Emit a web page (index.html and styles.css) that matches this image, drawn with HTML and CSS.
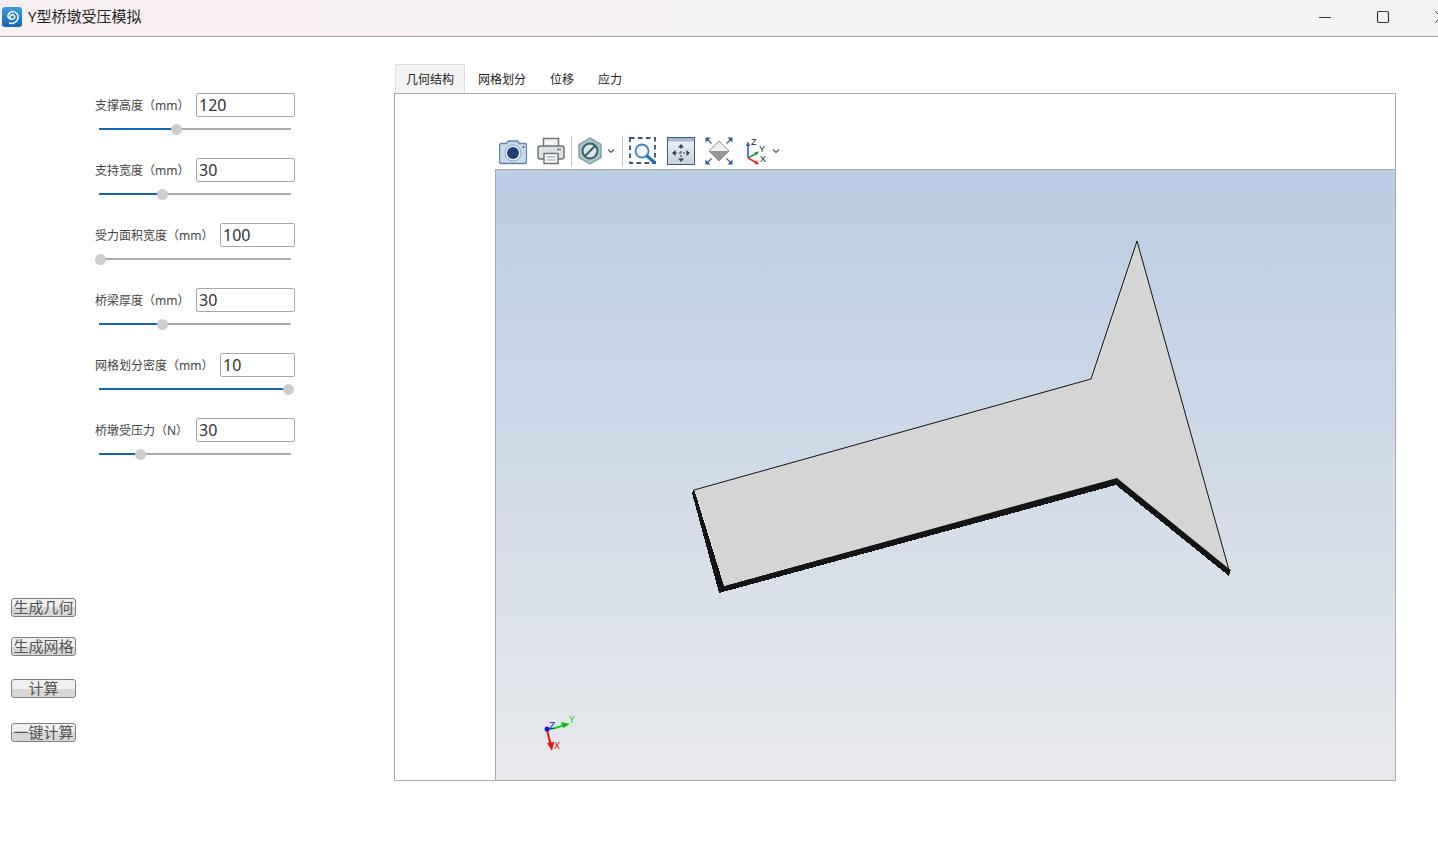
FILE: index.html
```html
<!DOCTYPE html>
<html lang="zh-CN">
<head>
<meta charset="utf-8">
<title>Y型桥墩受压模拟</title>
<link rel="stylesheet" href="styles.css">
</head>
<body>
<header class="titlebar">
  <svg class="app-icon" viewBox="0 0 20 20">
    <defs><linearGradient id="appg" x1="0" y1="0" x2="0" y2="1"><stop offset="0" stop-color="#3f9fe0"/><stop offset="1" stop-color="#1266b4"/></linearGradient></defs>
    <rect width="20" height="20" rx="3" fill="url(#appg)"/>
    <path d="M8.500 11.500a2.300 2.300 0 1 1 3.800-.2 4 4 0 0 1-6.300-1.300 4.800 4.800 0 0 1 7.500-4.500 5.600 5.600 0 0 1 2 7 6.200 6.200 0 0 1-8 3.500" fill="none" stroke="#fff" stroke-width="1.500" stroke-linecap="round"/>
  </svg>
  <span class="app-title">Y型桥墩受压模拟</span>
  <div class="win-controls">
    <span class="win-btn"><svg width="14" height="14" viewBox="0 0 14 14"><path d="M1 7.500h12" stroke="#333" stroke-width="1"/></svg></span>
    <span class="win-btn"><svg width="14" height="14" viewBox="0 0 14 14"><rect x="1.500" y="1.500" width="11" height="11" rx="1.500" fill="none" stroke="#333" stroke-width="1.200"/></svg></span>
    <span class="win-btn"><svg width="14" height="14" viewBox="0 0 14 14"><path d="M1.500 1.500l11 11M12.500 1.500l-11 11" stroke="#333" stroke-width="1"/></svg></span>
  </div>
</header>
<main class="app">
  <aside class="sidebar">
    <div class="params">
      <div class="param">
        <div class="param-head"><label class="param-label">支撑高度（mm）</label><input class="param-input" value="120"></div>
        <div class="slider"><div class="slider-fill" style="width:77px"></div><div class="slider-thumb"></div></div>
      </div>
      <div class="param">
        <div class="param-head"><label class="param-label">支持宽度（mm）</label><input class="param-input" value="30"></div>
        <div class="slider"><div class="slider-fill" style="width:63px"></div><div class="slider-thumb"></div></div>
      </div>
      <div class="param">
        <div class="param-head"><label class="param-label">受力面积宽度（mm）</label><input class="param-input short" value="100"></div>
        <div class="slider"><div class="slider-fill" style="width:1px"></div><div class="slider-thumb"></div></div>
      </div>
      <div class="param">
        <div class="param-head"><label class="param-label">桥梁厚度（mm）</label><input class="param-input" value="30"></div>
        <div class="slider"><div class="slider-fill" style="width:63px"></div><div class="slider-thumb"></div></div>
      </div>
      <div class="param">
        <div class="param-head"><label class="param-label">网格划分密度（mm）</label><input class="param-input short" value="10"></div>
        <div class="slider"><div class="slider-fill" style="width:189px"></div><div class="slider-thumb"></div></div>
      </div>
      <div class="param">
        <div class="param-head"><label class="param-label">桥墩受压力（N）</label><input class="param-input" value="30"></div>
        <div class="slider"><div class="slider-fill" style="width:41px"></div><div class="slider-thumb"></div></div>
      </div>
    </div>
    <div class="actions">
      <button class="action">生成几何</button>
      <button class="action gap-20">生成网格</button>
      <button class="action gap-23">计算</button>
      <button class="action gap-25">一键计算</button>
    </div>
  </aside>
  <section class="workspace">
    <nav class="tabs">
      <span class="tab active">几何结构</span>
      <span class="tab">网格划分</span>
      <span class="tab">位移</span>
      <span class="tab">应力</span>
    </nav>
    <div class="panel">
      <div class="viewer-col">
        <div class="toolbar">
          <svg class="tool" width="28" height="28" viewBox="0 0 28 28">
            <path d="M2 6.500h5.500l2-2.500h9l2 2.500H26a1.500 1.500 0 0 1 1.500 1.500v17a1.500 1.500 0 0 1-1.500 1.500H2A1.500 1.500 0 0 1 .5 25V8A1.500 1.500 0 0 1 2 6.500z" fill="#c9d9ec" stroke="#5f84ad" stroke-width="1.300"/>
            <circle cx="14" cy="16" r="8" fill="#eef3f9" stroke="#84a3c6"/>
            <circle cx="14" cy="16" r="6" fill="#1c3f78"/>
            <circle cx="24.500" cy="10" r="1" fill="#444"/>
          </svg>
          <svg class="tool gap-print" width="28" height="28" viewBox="0 0 28 28">
            <path d="M6.500 9V1.500h15V9" fill="#f5f5f5" stroke="#6d7378" stroke-width="1.500"/>
            <rect x="1" y="9" width="26" height="13" rx="2.500" fill="#dfe2e5" stroke="#6d7378" stroke-width="1.500"/>
            <rect x="7" y="16.500" width="14" height="10" fill="#fff" stroke="#6d7378" stroke-width="1.500"/>
            <path d="M9.500 20h9M9.500 23h9" stroke="#8a9096"/>
            <path d="M20 12.500h4" stroke="#6d7378" stroke-width="1.500"/>
          </svg>
          <span class="tool-sep sep-a"></span>
          <svg class="tool" width="24" height="28" viewBox="0 0 24 28">
            <path d="M12 1l11 6.500v13L12 27 1 20.500v-13z" fill="#aec6ca" stroke="#86a3a8" stroke-width="1.500"/>
            <circle cx="12" cy="14" r="7.500" fill="#dce7e9" stroke="#2f6470" stroke-width="2"/>
            <path d="M7 19L17 9" stroke="#2f6470" stroke-width="2"/>
          </svg>
          <svg class="chev chev-a" width="8" height="6" viewBox="0 0 8 6"><path d="M1 1.500l3 3 3-3" fill="none" stroke="#555" stroke-width="1.100"/></svg>
          <span class="tool-sep sep-b"></span>
          <svg class="tool" width="28" height="28" viewBox="0 0 28 28">
            <path d="M1 1h25v25H1z" fill="none" stroke="#34506f" stroke-width="1.800" stroke-dasharray="4.500 3.500"/>
            <circle cx="13" cy="14" r="6.500" fill="#f3f8fd" stroke="#3a86c4" stroke-width="1.800"/>
            <path d="M18 19l7 6" stroke="#1f6fb5" stroke-width="3" stroke-linecap="round"/>
          </svg>
          <svg class="tool gap-view" width="28" height="28" viewBox="0 0 28 28">
            <defs><linearGradient id="viewg" x1="0" y1="0" x2="0" y2="1"><stop offset="0" stop-color="#f2f5f9"/><stop offset="1" stop-color="#c5d0de"/></linearGradient></defs>
            <rect x=".5" y=".5" width="27" height="27" fill="url(#viewg)" stroke="#3d5878"/>
            <rect x="1" y="1" width="26" height="3.500" fill="#a5bad3"/>
            <path d="M14 10v12M8 16h12" stroke="#2c3e55" stroke-width="1" stroke-dasharray="2 2"/>
            <path d="M14 7l-3 3.500h6zM14 25l-3-3.500h6zM5 16l3.500-3v6zM23 16l-3.500-3v6z" fill="#2c3e55"/>
          </svg>
          <svg class="tool gap-view" width="28" height="28" viewBox="0 0 28 28">
            <path d="M14 4l10 10H4z" fill="#efefef"/>
            <path d="M4 14h20L14 24z" fill="#979797"/>
            <path d="M14 4l10 10-10 10L4 14z" fill="none" stroke="#7a7a7a" stroke-width=".8"/>
            <path d="M.5.500h5l-5 5zM27.500.500h-5l5 5zM.5 27.500h5l-5-5zM27.500 27.500h-5l5-5z" fill="#2e5d8f"/>
            <path d="M2 2l4.500 4.500M26 2l-4.500 4.500M2 26l4.500-4.500M26 26l-4.500-4.500" stroke="#2e5d8f" stroke-width="1.200"/>
          </svg>
          <svg class="tool gap-axes" width="26" height="28" viewBox="0 0 26 28">
            <path d="M4 21V7" stroke="#1f5fc4" stroke-width="1.500"/><path d="M4 4.500L1.800 9h4.400z" fill="#1f5fc4"/>
            <path d="M4 21l9-5" stroke="#1f9a4a" stroke-width="1.500"/><path d="M15 14.500l-4.600.4 2 3.800z" fill="#1f9a4a"/>
            <path d="M4 21l9 5" stroke="#dd2b2b" stroke-width="1.500"/><path d="M15 27.500l-4.600-.4 2-3.800z" fill="#dd2b2b"/>
            <text class="axis-tool" x="7" y="8">Z</text>
            <text class="axis-tool" x="15" y="15">Y</text>
            <text class="axis-tool" x="16" y="25">X</text>
          </svg>
          <svg class="chev chev-b" width="8" height="6" viewBox="0 0 8 6"><path d="M1 1.500l3 3 3-3" fill="none" stroke="#555" stroke-width="1.100"/></svg>
        </div>
        <div class="viewer">
          <svg class="scene" width="899" height="610" viewBox="496 170 899 610">
            <polygon points="692,493 694,489 724,586 1118,477 1231,570 1229,576 1116,485 719,593" fill="#141414" shape-rendering="crispEdges"/>
            <polygon points="697,490 1091,379 1137,241 1228,568 1117,478 724,586" fill="#d5d5d5"/>
            <polyline points="694,490 1091,379 1137,241 1229,570" fill="none" stroke="#111" stroke-width="1"/>
            <line x1="547" y1="730" x2="566" y2="725" stroke="#18d818" stroke-width="2"/>
            <polygon points="570,724 561,722 563,728" fill="#10c010"/>
            <line x1="547" y1="730" x2="551" y2="746" stroke="#f01010" stroke-width="2"/>
            <polygon points="552,751 547,743 554,742" fill="#f01010"/>
            <circle cx="547" cy="729" r="2.500" fill="#1414e0"/>
            <text class="axis-z" x="549" y="729">Z</text>
            <text class="axis-y" x="569" y="723">Y</text>
            <text class="axis-x" x="554" y="749">X</text>
          </svg>
        </div>
      </div>
    </div>
  </section>
</main>
</body>
</html>
```

FILE: styles.css
```css
* { box-sizing: border-box; }
html, body { margin: 0; height: 100%; overflow: hidden; background: #fff; }
body { font-family: "Noto Sans", "Noto Sans CJK SC", sans-serif; color: #333; }

.titlebar {
  display: flex;
  align-items: center;
  height: 37px;
  padding: 0 0 2px 2px;
  background: linear-gradient(90deg, #f8eff3 0%, #f7f0f4 35%, #f3f3f5 60%, #f3f4f6 100%);
  border-bottom: 1px solid #a3a3a3;
  overflow: hidden;
}
.app-icon { width: 20px; height: 20px; flex: none; }
.app-title { margin: -2px 0 0 6px; font-size: 15px; line-height: 20px; color: #222; }
.win-controls { display: flex; margin-left: auto; margin-right: -32px; }
.win-btn { display: flex; align-items: center; justify-content: center; width: 58px; height: 30px; }

.app { display: flex; }
.sidebar { width: 394px; flex: none; }
.params { padding: 56px 0 0 95px; }
.param { height: 65px; width: 200px; }
.param-head { display: flex; align-items: center; height: 24px; }
.param-label { font-size: 12px; line-height: 22px; margin-top: 1px; color: #444; white-space: nowrap; }
.param-input {
  width: 99px;
  height: 24px;
  margin-left: auto;
  padding: 0 2px;
  border: 1px solid #a8a8a8;
  border-radius: 2px;
  background: #fff;
  font: 16px "Noto Sans", sans-serif;
  color: #333;
  outline: none;
}
.param-input.short { width: 75px; }
.slider {
  display: flex;
  align-items: center;
  width: 192px;
  height: 10px;
  margin: 7px 0 0 4px;
  background: linear-gradient(#aaa, #aaa) center / 100% 2px no-repeat;
}
.slider-fill { height: 2px; background: #1268b8; flex: none; }
.slider-thumb {
  width: 11px;
  height: 11px;
  margin-left: -5px;
  border-radius: 50%;
  background: #cdcdcd;
  flex: none;
}

.actions { display: flex; flex-direction: column; align-items: flex-start; padding: 115px 0 0 11px; }
.action {
  width: 65px;
  height: 19px;
  padding: 0 0 2px;
  border: 1px solid #808080;
  border-radius: 3px;
  background: linear-gradient(#f0f0f0 0 50%, #d7d7d7 50% 100%);
  font: 15px/15px "Noto Sans CJK SC", sans-serif;
  color: #555;
  white-space: nowrap;
}
.gap-20 { margin-top: 20px; }
.gap-23 { margin-top: 23px; }
.gap-25 { margin-top: 25px; }

.workspace { width: 1002px; flex: none; padding-top: 27px; }
.tabs { display: flex; height: 29px; }
.tab {
  display: flex;
  align-items: center;
  padding: 0 12px;
  font-size: 12px;
  color: #222;
  white-space: nowrap;
}
.tab.active { margin: 0 1px; background: #f3f3f3; border: 1px solid #dcdcdc; border-bottom: 0; padding: 0 10px; }

.panel { height: 688px; border: 1px solid #aaa; padding-left: 100px; }
.viewer-col { display: flex; flex-direction: column; height: 100%; }
.toolbar { display: flex; align-items: center; height: 75px; padding: 39px 0 0 4px; flex: none; }
.tool { display: block; flex: none; }
.tool-sep { width: 1px; height: 30px; background: #c4c4c4; flex: none; }
.gap-print { margin-left: 10px; }
.sep-a { margin: 0 6px; }
.sep-b { margin: 0 6px 0 7px; }
.chev { flex: none; }
.chev-a { margin-left: 5px; }
.gap-view { margin-left: 10px; }
.gap-axes { margin-left: 11px; }
.chev-b { margin-left: 2px; }
.axis-tool { font: 9px "Liberation Sans", sans-serif; fill: #222; }

.viewer {
  flex: 1;
  border-top: 1px solid #a9a9a9;
  border-left: 1px solid #a9a9a9;
  background: linear-gradient(#b9cde4 0%, #e8e9ec 100%);
}
.scene { display: block; }
.axis-z { font: 9px "DejaVu Sans", sans-serif; fill: #1414e0; }
.axis-y { font: 9px "DejaVu Sans", sans-serif; fill: #18c818; }
.axis-x { font: 9px "DejaVu Sans", sans-serif; fill: #f01010; }
```
